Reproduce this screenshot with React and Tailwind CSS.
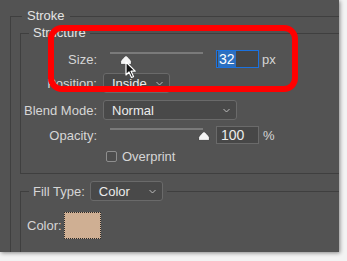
import { useState } from "react";

const Chevron = () => (
  <svg width="7" height="5" viewBox="0 0 7 5" className="shrink-0">
    <path d="M0.5 1 L3.5 4 L6.5 1" fill="none" stroke="#bdbdbd" strokeWidth="1" />
  </svg>
);

const Thumb = () => (
  <svg width="12" height="10" viewBox="0 0 12 10">
    <path
      d="M6 0.6 C6.6 0.6 11.4 5.2 11.4 6.6 L11.4 9.4 L0.6 9.4 L0.6 6.6 C0.6 5.2 5.4 0.6 6 0.6 Z"
      fill="#f4f4f4"
      stroke="#2e2e2e"
      strokeWidth="0.8"
    />
  </svg>
);

const Cursor = () => (
  <svg width="12" height="18" viewBox="0 0 12 18">
    <path
      d="M1 1 L1 14 L4 11 L6.5 16.5 L8.5 15.6 L6 10.2 L10.2 10.2 Z"
      fill="#111"
      stroke="#fff"
      strokeWidth="1.2"
      strokeLinejoin="round"
    />
  </svg>
);

function Dropdown({ value, width }) {
  return (
    <div
      className={`flex items-center justify-between h-[20px] ${width} pl-[8px] pr-[6px] rounded-[3px] border border-[#6a6a6a] bg-[#494949] text-[#ececec]`}
    >
      <span>{value}</span>
      <Chevron />
    </div>
  );
}

export default function App() {
  const [size] = useState(32);
  const [opacity] = useState(100);

  return (
    <div className="w-[347px] h-[261px] bg-[#f3f3f3] font-['Liberation_Sans',Arial,sans-serif] text-[13px] text-[#d6d6d6] leading-none">
      <div className="relative w-[339px] h-[252px] bg-[#535353] shadow-[1px_1px_4px_rgba(0,0,0,0.45)] overflow-hidden pt-[16px] pl-[10px] flex flex-col">

        {/* ================= STROKE ================= */}
        <div className="flex-1 border-t border-l border-[#3f3f3f] flex flex-col">
          <div className="-mt-[9px] h-[16px] leading-[16px] ml-[11px] px-[5px] bg-[#535353] self-start text-[#e4e4e4]">
            Stroke
          </div>

          {/* STRUCTURE */}
          <div className="mt-[9px] ml-[9px] h-[141px] border-t border-l border-b border-[#3f3f3f] flex flex-col">
            <div className="-mt-[9px] h-[16px] leading-[16px] ml-[8px] px-[4px] bg-[#535353] self-start text-[#e4e4e4]">
              Structure
            </div>

            {/* Size */}
            <div className="mt-[8px] h-[20px] flex items-center">
              <span className="w-[76px] text-right">Size:</span>
              <div className="relative ml-[13px] w-[93px] h-[20px]">
                <div className="mt-[3px] h-[2px] bg-[#7a7a7a]" />
                <div className="absolute left-[10px] top-[6px]">
                  <Thumb />
                </div>
              </div>
              <div className="ml-[13px] w-[43px] h-[18px] border border-[#1b72e0] bg-[#464646] flex items-center pl-[1px]">
                <span className="bg-[#2c6fc0] text-white text-[14px] leading-[14px] px-[1px] py-[1px]">
                  {size}
                </span>
              </div>
              <span className="ml-[3px]">px</span>
            </div>

            {/* Position */}
            <div className="mt-[4px] h-[20px] flex items-center">
              <span className="w-[76px] text-right">Position:</span>
              <div className="ml-[6px]">
                <Dropdown value="Inside" width="w-[67px]" />
              </div>
            </div>

            {/* Blend Mode */}
            <div className="mt-[7px] h-[20px] flex items-center">
              <span className="w-[76px] text-right">Blend Mode:</span>
              <div className="ml-[6px]">
                <Dropdown value="Normal" width="w-[134px]" />
              </div>
            </div>

            {/* Opacity */}
            <div className="mt-[5px] h-[20px] flex items-center">
              <span className="w-[76px] text-right">Opacity:</span>
              <div className="relative ml-[13px] w-[93px] h-[20px]">
                <div className="mt-[3px] h-[2px] bg-[#7a7a7a]" />
                <div className="absolute left-[88px] top-[6px]">
                  <Thumb />
                </div>
              </div>
              <div className="ml-[13px] w-[43px] h-[18px] border border-[#6a6a6a] bg-[#474747] flex items-center pl-[4px] text-[14px] text-[#ececec]">
                {opacity}
              </div>
              <span className="ml-[4px]">%</span>
            </div>

            {/* Overprint */}
            <div className="mt-[1px] h-[20px] flex items-center">
              <span className="w-[76px]" />
              <div className="ml-[9px] w-[11px] h-[11px] rounded-[2px] border border-[#8e8e8e] bg-[#4d4d4d]" />
              <span className="ml-[5px]">Overprint</span>
            </div>
          </div>

          {/* FILL TYPE */}
          <div className="mt-[17px] ml-[9px] flex-1 border-t border-l border-[#3f3f3f] flex flex-col">
            <div className="-mt-[12px] h-[22px] ml-[8px] px-[4px] bg-[#535353] self-start flex items-center">
              <span>Fill Type:</span>
              <div className="ml-[5px]">
                <Dropdown value="Color" width="w-[73px]" />
              </div>
            </div>

            <div className="mt-[10px] flex items-center">
              <span className="ml-[6px]">Color:</span>
              <div className="ml-[2px] w-[37px] h-[27px] bg-[#cfaf93] border border-dotted border-[#2a2a2a]" />
            </div>
          </div>
        </div>

        {/* ================= OVERLAYS ================= */}
        <div className="absolute left-[48px] top-[25px] w-[250px] h-[67px] border-[6px] border-[#ff0000] rounded-[14px]" />
        <div className="absolute left-[125px] top-[61px]">
          <Cursor />
        </div>
      </div>
    </div>
  );
}
